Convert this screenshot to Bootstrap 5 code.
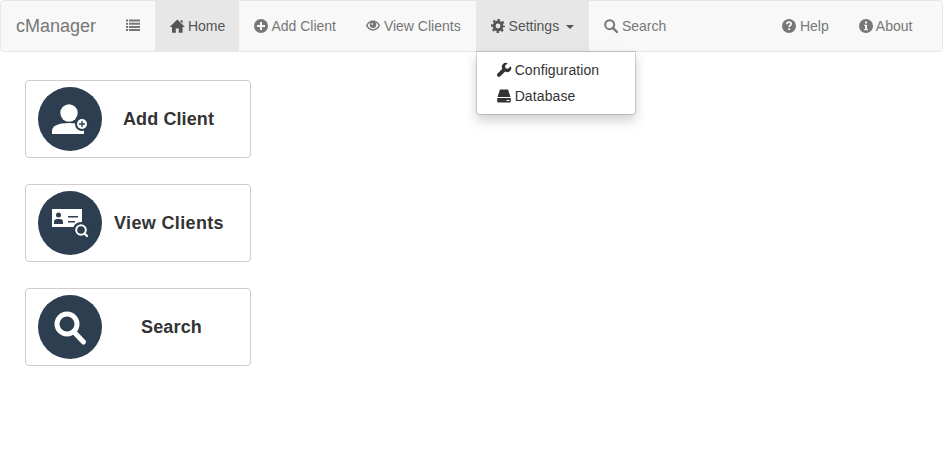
<!DOCTYPE html>
<html lang="en">
<head>
  <meta charset="UTF-8">
  <meta name="viewport" content="width=device-width, initial-scale=1.0">
  <title>cManager</title>
  <link href="https://cdn.jsdelivr.net/npm/bootstrap@5.3.0/dist/css/bootstrap.min.css" rel="stylesheet">
  <style>
    body {
      font-family: "Liberation Sans", Arial, sans-serif;
      font-size: 14px;
      line-height: 20px;
      color: #333;
    }
    .top-bar {
      background: #f8f8f8;
      border: 1px solid #e7e7e7;
      border-radius: 4px;
      padding: 0 14.6px 0 0;
      flex-wrap: nowrap;
    }
    .top-bar .navbar-brand {
      font-size: 18px;
      line-height: 20px;
      color: #777;
      padding: 15px;
      margin: 0;
    }
    .top-bar .nav-link {
      color: #777;
      padding: 15px !important;
      line-height: 20px;
    }
    .top-bar .nav-item.is-on > .nav-link {
      color: #555;
      background: #e7e7e7;
    }
    .top-bar .nav-home > .nav-link {
      padding-right: 14px !important;
    }
    .top-bar .dropdown-toggle::after {
      border-top: 4px solid;
      border-left: 4px solid transparent;
      border-right: 4px solid transparent;
      border-bottom: 0;
      margin-left: 3px;
      vertical-align: 2px;
    }
    .gi {
      width: 14px;
      height: 14px;
      fill: currentColor;
      vertical-align: -2px;
      overflow: visible;
    }
    .settings-menu {
      top: 100%;
      left: 0;
      min-width: 160px;
      width: 160px;
      margin: 0;
      padding: 5px 0;
      font-size: 14px;
      border-color: rgba(0,0,0,.15);
      border-radius: 0 0 4px 4px;
      box-shadow: 0 6px 12px rgba(0,0,0,.175);
    }
    .settings-menu .dropdown-item {
      padding: 3px 20px;
      line-height: 20px;
      color: #333;
      letter-spacing: .1px;
    }
    .tiles {
      padding: 28px 0 0 25px;
      gap: 26px;
    }
    .tile {
      width: 226px;
      height: 78px;
      padding: 0 12px;
      background: #fff;
      border: 1px solid #ccc;
      border-radius: 4px;
      color: #333;
      font-size: 18px;
      font-weight: 700;
      text-decoration: none;
    }
    .tile-disc {
      width: 64px;
      height: 64px;
      flex: none;
    }
    .tile-add { letter-spacing: .1px; padding-right: 3px; }
    .tile-view { letter-spacing: .35px; padding-right: 2px; }
    .tile-find { letter-spacing: .15px; padding-left: 3px; }
  </style>
</head>
<body>

<!-- Header -->
<nav class="navbar navbar-expand top-bar">
  <a class="navbar-brand" href="#">cManager</a>
  <ul class="navbar-nav">
    <li class="nav-item">
      <a class="nav-link" href="#">
        <svg class="gi" viewBox="0 0 14 14"><path d="M0 .5h2v2H0zM3 .5h11v2H3zM0 3.700h2v2H0zM3 3.700h11v2H3zM0 6.900h2v2H0zM3 6.900h11v2H3zM0 10.100h2v2H0zM3 10.100h11v2H3z"/></svg>
      </a>
    </li>
    <li class="nav-item nav-home is-on">
      <a class="nav-link" href="#">
        <svg class="gi" viewBox="0 0 14 14"><path d="M7.300.6 15 7.900H12.600V13.800H8.800V9.600H5.800V13.800H2V7.900H-.4zM10.600 1.200H12.600V4.600L10.600 2.800z"/></svg>
        Home
      </a>
    </li>
    <li class="nav-item">
      <a class="nav-link" href="#">
        <svg class="gi" viewBox="0 0 14 14"><path fill-rule="evenodd" d="M7 0a7 7 0 1 0 0 14A7 7 0 0 0 7 0zM6 3h2v3h3v2H8v3H6V8H3V6h3z"/></svg>
        Add Client
      </a>
    </li>
    <li class="nav-item">
      <a class="nav-link" href="#">
        <svg class="gi" viewBox="0 0 14 14"><path fill-rule="evenodd" d="M7 1.500C3.600 1.500 1 4 0 6.500c1 2.500 3.600 5 7 5s6-2.500 7-5c-1-2.500-3.600-5-7-5zM7 3c-2.500 0-4.600 1.700-5.500 3.500C2.400 8.300 4.500 10.200 7 10.200s4.600-1.900 5.500-3.700C11.600 4.700 9.500 3 7 3z"/><path fill-rule="evenodd" d="M7 2.600a3.200 3.200 0 1 0 0 6.400 3.200 3.200 0 0 0 0-6.400zM5.400 4.200h1.500v1.500H5.400z"/></svg>
        View Clients
      </a>
    </li>
    <li class="nav-item dropdown show is-on">
      <a class="nav-link dropdown-toggle show" href="#" role="button" data-bs-toggle="dropdown" aria-expanded="true">
        <svg class="gi" viewBox="0 0 14 14"><circle cx="7" cy="7" r="3.900" fill="none" stroke="currentColor" stroke-width="3"/><circle cx="7" cy="7" r="6" fill="none" stroke="currentColor" stroke-width="2" stroke-dasharray="2.400 2.312" stroke-dashoffset="1.200"/></svg>
        Settings
      </a>
      <ul class="dropdown-menu settings-menu show">
        <li>
          <a class="dropdown-item" href="#">
            <svg class="gi" viewBox="0 0 14 14"><path d="M13.700 3.200 11 5.800 8.500 5.300 8 2.800 10.700.3A4 4 0 0 0 5.300 5.700L.6 10.600A1.900 1.900 0 0 0 3.300 13.300L8.200 8.600A4 4 0 0 0 13.700 3.200z"/></svg>
            Configuration
          </a>
        </li>
        <li>
          <a class="dropdown-item" href="#">
            <svg class="gi" viewBox="0 0 14 14"><path fill-rule="evenodd" d="M3 .5h8L13.500 8H.5zM.2 9h13.600v3.500a1 1 0 0 1-1 1H1.200a1 1 0 0 1-1-1zM9.500 11v1h3v-1z"/></svg>
            Database
          </a>
        </li>
      </ul>
    </li>
    <li class="nav-item">
      <a class="nav-link" href="#">
        <svg class="gi" viewBox="0 0 14 14"><circle cx="5.700" cy="5.700" r="4.500" fill="none" stroke="currentColor" stroke-width="2"/><path d="M8.800 8.800 13 13" fill="none" stroke="currentColor" stroke-width="2.400" stroke-linecap="round"/></svg>
        Search
      </a>
    </li>
  </ul>
  <ul class="navbar-nav ms-auto">
    <li class="nav-item">
      <a class="nav-link" href="#">
        <svg class="gi" viewBox="0 0 14 14"><circle cx="7" cy="7" r="7"/><path d="M4.800 5.300C4.800 3.900 5.800 3.200 7 3.200S9.200 3.900 9.200 5.100C9.200 6.500 7.100 6.500 7.100 8.100" fill="none" stroke="#f8f8f8" stroke-width="1.700"/><path d="M6.100 9.300h2v1.700h-2z" fill="#f8f8f8"/></svg>
        Help
      </a>
    </li>
    <li class="nav-item">
      <a class="nav-link" href="#">
        <svg class="gi" viewBox="0 0 14 14"><circle cx="7" cy="7" r="7"/><path d="M6 2.600h2v2H6zM5.200 5.800H8V10h.9v1.300H5.200V10h.9V7.100h-.9z" fill="#f8f8f8"/></svg>
        About
      </a>
    </li>
  </ul>
</nav>

<!-- Shortcuts -->
<main class="tiles d-flex flex-column align-items-start">
  <a class="tile d-flex align-items-center" href="#">
    <svg class="tile-disc" viewBox="0 0 64 64">
      <circle cx="32" cy="32" r="32" fill="#2c3e50"/>
      <circle cx="31" cy="26" r="8.700" fill="#fff"/>
      <path d="M14 47V44C14 39 20 36 31 36S46 39 46 44V47z" fill="#fff"/>
      <circle cx="44" cy="37" r="7" fill="#2c3e50"/>
      <circle cx="44" cy="37" r="5" fill="#fff"/>
      <path d="M41 36.300h2.300V34h1.400v2.300H47v1.400h-2.300V40h-1.400v-2.300H41z" fill="#2c3e50"/>
    </svg>
    <span class="flex-grow-1 text-center tile-add">Add Client</span>
  </a>
  <a class="tile d-flex align-items-center" href="#">
    <svg class="tile-disc" viewBox="0 0 64 64">
      <circle cx="32" cy="32" r="32" fill="#2c3e50"/>
      <rect x="14" y="18" width="30" height="18" fill="#fff"/>
      <circle cx="20.500" cy="24" r="2.500" fill="#2c3e50"/>
      <path d="M16 33V30.500C16 28.500 18 28 20.500 28S25 28.500 25 30.500V33z" fill="#2c3e50"/>
      <path d="M30 25H40V26.500H30zM30 30H37V31.500H30z" fill="#2c3e50"/>
      <circle cx="43" cy="39" r="8" fill="#2c3e50"/>
      <circle cx="43" cy="39" r="4.800" fill="none" stroke="#fff" stroke-width="2"/>
      <path d="M46.500 42.500 49 45" stroke="#fff" stroke-width="2.400" stroke-linecap="round"/>
    </svg>
    <span class="flex-grow-1 text-center tile-view">View Clients</span>
  </a>
  <a class="tile d-flex align-items-center" href="#">
    <svg class="tile-disc" viewBox="0 0 64 64">
      <circle cx="32" cy="32" r="32" fill="#2c3e50"/>
      <circle cx="29" cy="29" r="10" fill="none" stroke="#fff" stroke-width="5"/>
      <path d="M36.500 37.500 45.500 47" stroke="#fff" stroke-width="5" stroke-linecap="round"/>
    </svg>
    <span class="flex-grow-1 text-center tile-find">Search</span>
  </a>
</main>

<script src="https://cdn.jsdelivr.net/npm/bootstrap@5.3.0/dist/js/bootstrap.bundle.min.js"></script>
</body>
</html>
